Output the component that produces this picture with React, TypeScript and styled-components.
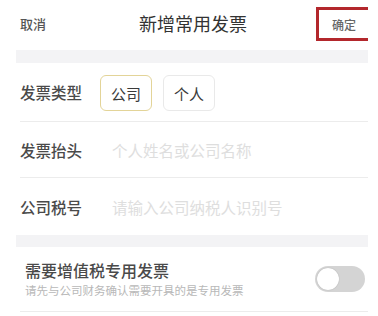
import React, { useState } from "react"
import styled, { createGlobalStyle } from "styled-components"

const GlobalStyle = createGlobalStyle`
  html, body {
    margin: 0;
    background: #fff;
    font-family: "Noto Sans CJK SC", "Noto Sans", sans-serif;
  }
`

export default function App() {
  const [type, setType] = useState<"company" | "person">("company")
  const [special, setSpecial] = useState(false)

  return (
    <>
      <GlobalStyle />
      <Page>
        <Header>
          <HeaderSide>取消</HeaderSide>
          <Title>新增常用发票</Title>
          <ConfirmBox>确定</ConfirmBox>
        </Header>
        <Band height={13} />

        <Row height={59}>
          <Label>发票类型</Label>
          <Chips>
            <Chip active={type === "company"} onClick={() => setType("company")}>
              公司
            </Chip>
            <Chip active={type === "person"} onClick={() => setType("person")}>
              个人
            </Chip>
          </Chips>
        </Row>

        <Row height={56}>
          <Label>发票抬头</Label>
          <Field placeholder="个人姓名或公司名称" />
        </Row>

        <Row height={57} last>
          <Label>公司税号</Label>
          <Field placeholder="请输入公司纳税人识别号" />
        </Row>

        <Band height={12} />

        <SwitchRow>
          <SwitchText>
            <SwitchTitle>需要增值税专用发票</SwitchTitle>
            <SwitchHint>请先与公司财务确认需要开具的是专用发票</SwitchHint>
          </SwitchText>
          <Toggle on={special} onClick={() => setSpecial(!special)}>
            <Knob on={special} />
          </Toggle>
        </SwitchRow>
      </Page>
    </>
  )
}

const Page = styled.div`
  width: 352px;
  margin-left: 16px;
  background: #fff;
`

const Header = styled.div`
  height: 50px;
  display: flex;
  align-items: center;
  justify-content: space-between;
  padding-left: 4px;
  overflow: hidden;
`

const HeaderSide = styled.div`
  font-size: 13px;
  font-weight: 500;
  color: #555;
  width: 50px;
  padding-bottom: 4px;
`

const Title = styled.div`
  font-size: 18px;
  color: #333;
  padding-bottom: 4px;
`

const ConfirmBox = styled.div`
  width: 50px;
  height: 28px;
  margin-right: -4px;
  margin-bottom: 2px;
  border: 3px solid #b3272c;
  display: flex;
  align-items: center;
  justify-content: center;
  font-size: 12px;
  font-weight: 500;
  color: #666;
  box-sizing: content-box;
`

const Band = styled.div<{ height: number }>`
  height: ${p => p.height}px;
  background: #f3f3f5;
`

const Row = styled.div<{ height: number; last?: boolean }>`
  height: ${p => p.height}px;
  margin-left: 4px;
  display: flex;
  align-items: center;
  border-bottom: ${p => (p.last ? "none" : "1px solid #ececec")};
  box-sizing: border-box;
`

const Label = styled.div`
  width: 80px;
  flex-shrink: 0;
  font-size: 15.5px;
  font-weight: 500;
  color: #4a4a4a;
`

const Chips = styled.div`
  display: flex;
  gap: 11px;
  margin-top: 2px;
`

const Chip = styled.div<{ active?: boolean }>`
  width: 52px;
  height: 36px;
  box-sizing: border-box;
  border: 1.5px solid ${p => (p.active ? "#e3d498" : "#e9e9e9")};
  border-radius: 6px;
  display: flex;
  align-items: center;
  justify-content: center;
  font-size: 15px;
  color: #3a3a3a;
  cursor: pointer;
`

const Field = styled.input`
  flex: 1;
  margin-left: 12px;
  border: none;
  outline: none;
  padding: 0;
  font-family: inherit;
  font-size: 15.5px;
  color: #333;
  background: transparent;

  &::placeholder {
    color: #dedede;
  }
`

const SwitchRow = styled.div`
  height: 65px;
  margin-left: 4px;
  padding-left: 5px;
  display: flex;
  align-items: center;
  justify-content: space-between;
  border-bottom: 1px solid #ececec;
  box-sizing: border-box;
`

const SwitchText = styled.div`
  display: flex;
  flex-direction: column;
  gap: 2px;
`

const SwitchTitle = styled.div`
  font-size: 16px;
  font-weight: 500;
  line-height: 20px;
  color: #4a4a4a;
`

const SwitchHint = styled.div`
  font-size: 11.5px;
  line-height: 16px;
  color: #b8b8b8;
`

const Toggle = styled.div<{ on: boolean }>`
  width: 50px;
  height: 26px;
  margin-right: 3px;
  border-radius: 13px;
  background: ${p => (p.on ? "#e3c46c" : "#d4d4d4")};
  position: relative;
  cursor: pointer;
`

const Knob = styled.div<{ on: boolean }>`
  position: absolute;
  top: 2px;
  left: ${p => (p.on ? "26px" : "2px")};
  width: 22px;
  height: 22px;
  border-radius: 50%;
  background: #fff;
  box-shadow: 0 0 1px rgba(0, 0, 0, 0.3);
`
